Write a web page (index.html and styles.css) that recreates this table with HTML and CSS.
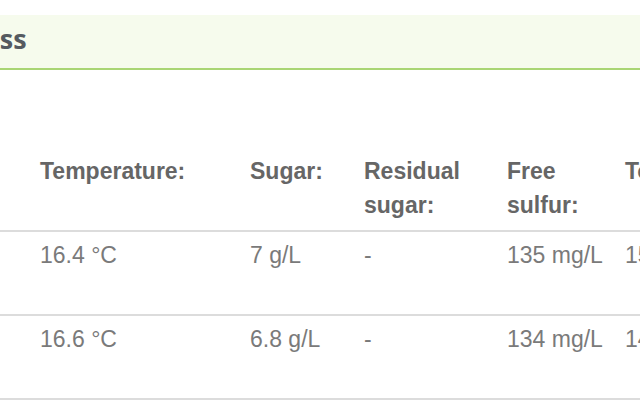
FILE: index.html
```html
<!DOCTYPE html>
<html>
<head>
<meta charset="utf-8">
<link rel="stylesheet" href="styles.css">
</head>
<body>
<div class="page">
  <div class="section-head">
    <h2 class="section-title">Process</h2>
  </div>
  <table class="data">
    <thead>
      <tr>
        <th class="c1">Temperature:</th>
        <th class="c2">Sugar:</th>
        <th class="c3">Residual sugar:</th>
        <th class="c4">Free sulfur:</th>
        <th class="c5">Total sulfur:</th>
      </tr>
    </thead>
    <tbody>
      <tr>
        <td class="c1">16.4 °C</td>
        <td class="c2">7 g/L</td>
        <td class="c3">-</td>
        <td class="c4">135 mg/L</td>
        <td class="c5">158 mg/L</td>
      </tr>
      <tr>
        <td class="c1">16.6 °C</td>
        <td class="c2">6.8 g/L</td>
        <td class="c3">-</td>
        <td class="c4">134 mg/L</td>
        <td class="c5">147 mg/L</td>
      </tr>
    </tbody>
  </table>
</div>
</body>
</html>
```

FILE: styles.css
```css
html, body {
  margin: 0;
  padding: 0;
  background: #ffffff;
  overflow: hidden;
}
.page {
  width: 640px;
  padding-top: 15px;
}
.section-head {
  background: #f6fbed;
  border-bottom: 2px solid #a9d574;
  height: 55px;
  box-sizing: border-box;
  padding-bottom: 6px;
  display: flex;
  align-items: center;
  overflow: hidden;
}
.section-title {
  margin: 0 0 0 -76px;
  font-family: "Open Sans", sans-serif;
  font-weight: 700;
  font-size: 27px;
  color: #555a60;
  white-space: nowrap;
}
.data {
  margin-top: 78px;
  border-collapse: collapse;
  table-layout: fixed;
  width: 760px;
  font-family: "Liberation Sans", Arial, sans-serif;
  font-size: 23px;
  line-height: 34px;
}
.data th, .data td {
  text-align: left;
  vertical-align: top;
  padding: 6px 0 8px 10px;
}
.data th {
  font-weight: 700;
  color: #666666;
  border-bottom: 2px solid #dcdcdc;
}
.data td {
  font-weight: 400;
  color: #7a7a7a;
  height: 68px;
  border-bottom: 2px solid #dcdcdc;
}
.data .c1 { width: 200px; padding-left: 40px; }
.data .c2 { width: 104px; }
.data .c3 { width: 133px; }
.data .c4 { width: 108px; }
.data .c5 { width: 140px; }
```
